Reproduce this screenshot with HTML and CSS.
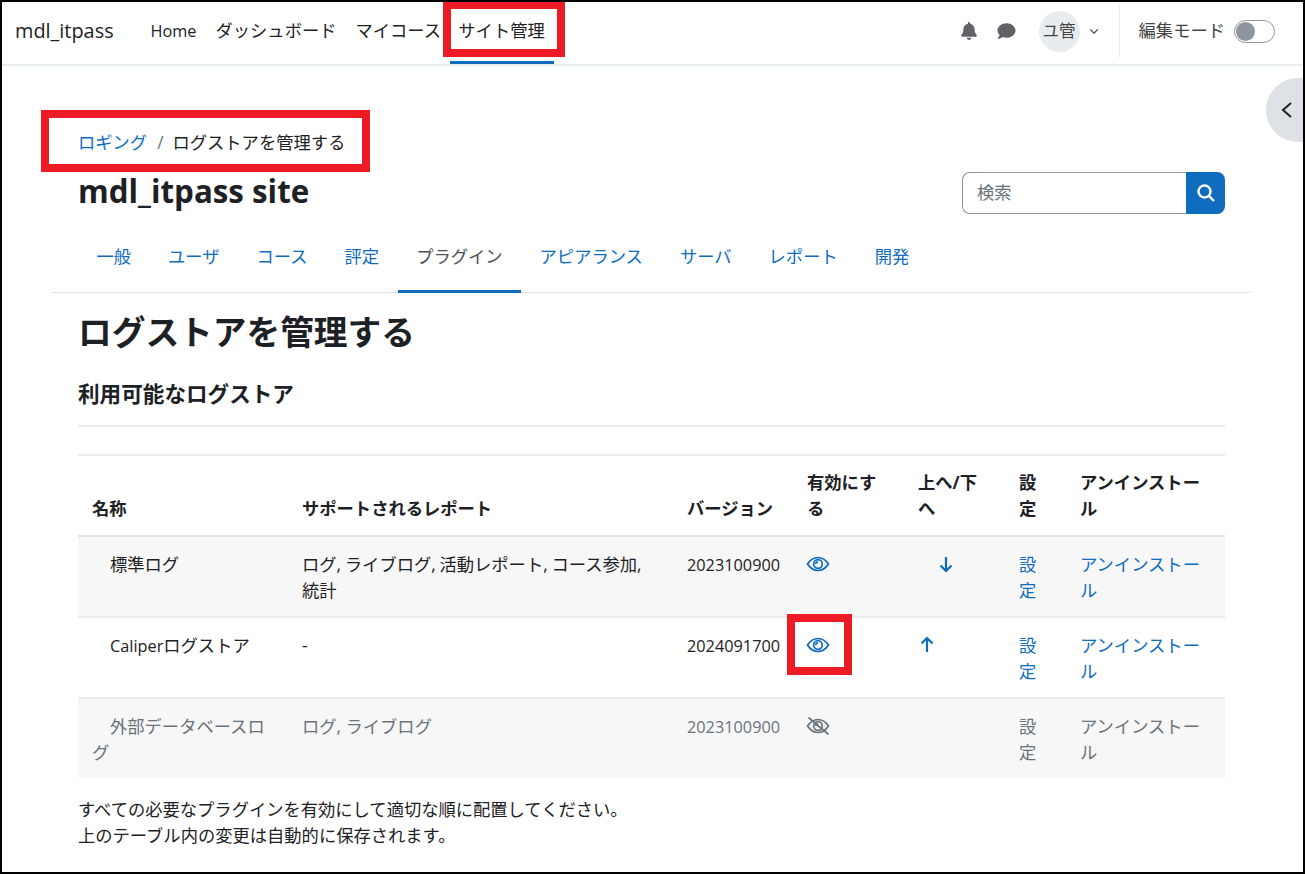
FILE: index.html
```html
<!DOCTYPE html>
<html lang="ja">
<head>
<meta charset="utf-8">
<title>ログストアを管理する</title>
<link rel="stylesheet" href="styles.css">
</head>
<body>
<div class="frame">
  <header class="navbar">
    <a class="brand">mdl_itpass</a>
    <nav class="primary">
      <a class="nav-link latin">Home</a>
      <a class="nav-link">ダッシュボード</a>
      <a class="nav-link">マイコース</a>
      <a class="nav-link active">サイト管理</a>
    </nav>
    <div class="nav-right">
      <svg class="nav-icon bell" viewBox="0 0 448 512"><path d="M224 512c35 0 64-29 64-64H160c0 35 29 64 64 64zm215-150c-19-21-55-52-55-154 0-78-54-140-128-155V32a32 32 0 0 0-64 0v21C118 68 64 130 64 208c0 102-36 133-55 154-6 6-9 14-9 22 0 16 13 32 32 32h384c19 0 32-16 32-32 0-8-3-16-9-22z"/></svg>
      <svg class="nav-icon chat" viewBox="0 0 512 512"><path d="M256 32C115 32 0 125 0 240c0 50 22 95 58 131-13 51-55 96-56 97-2 2-3 6-1 9s4 4 7 4c66 0 116-32 140-51 34 12 71 19 108 19 141 0 256-93 256-208S397 32 256 32z"/></svg>
      <div class="avatar">ユ管</div>
      <svg class="caret" viewBox="0 0 12 8"><path d="M1.5 1.5 6 6l4.5-4.5"/></svg>
      <div class="divider"></div>
      <span class="edit-label">編集モード</span>
      <span class="switch"><span class="knob"></span></span>
    </div>
  </header>

  <button class="drawer-toggle" aria-label="開く"><svg viewBox="0 0 12 20"><path d="M10 3 2 10l8 7"/></svg></button>

  <main class="main">
    <div class="breadcrumb"><a class="link">ロギング</a><span class="sep">/</span><span>ログストアを管理する</span></div>
    <div class="title-row">
      <h1 class="site-title">mdl_itpass site</h1>
      <form class="search">
        <input class="search-input" placeholder="検索">
        <span class="search-btn"><svg viewBox="0 0 20 20"><circle cx="8.5" cy="8.5" r="6"/><path d="m13 13 5 5"/></svg></span>
      </form>
    </div>
    <ul class="tabs">
      <li class="tab">一般</li>
      <li class="tab">ユーザ</li>
      <li class="tab">コース</li>
      <li class="tab">評定</li>
      <li class="tab current">プラグイン</li>
      <li class="tab">アピアランス</li>
      <li class="tab">サーバ</li>
      <li class="tab">レポート</li>
      <li class="tab">開発</li>
    </ul>
    <h2 class="page-title">ログストアを管理する</h2>
    <h3 class="section-title">利用可能なログストア</h3>
    <hr class="rule">
    <table class="stores">
      <colgroup>
        <col class="c-name"><col class="c-rep"><col class="c-ver"><col class="c-en"><col class="c-ud"><col class="c-set"><col class="c-un">
      </colgroup>
      <thead>
        <tr>
          <th>名称</th><th>サポートされるレポート</th><th>バージョン</th><th>有効にする</th><th>上へ/下へ</th><th>設定</th><th>アンインストール</th>
        </tr>
      </thead>
      <tbody>
        <tr class="odd">
          <td class="name">標準ログ</td>
          <td class="reports">ログ, ライブログ, 活動レポート, コース参加, 統計</td>
          <td class="latin">2023100900</td>
          <td><svg class="eye" viewBox="0 0 24 18"><use href="#eye-on"/></svg></td>
          <td><svg class="arrow down" viewBox="0 0 16 18"><path d="M8 2v14M2.5 10.5 8 16l5.500-5.500"/></svg></td>
          <td><a class="link">設定</a></td>
          <td><a class="link">アンインストール</a></td>
        </tr>
        <tr>
          <td class="name"><span class="latin">Caliper</span>ログストア</td>
          <td>-</td>
          <td class="latin">2024091700</td>
          <td><svg class="eye" viewBox="0 0 24 18"><use href="#eye-on"/></svg></td>
          <td><svg class="arrow" viewBox="0 0 16 18"><path d="M8 16V2M2.500 7.500 8 2l5.500 5.500"/></svg></td>
          <td><a class="link">設定</a></td>
          <td><a class="link">アンインストール</a></td>
        </tr>
        <tr class="odd dimmed">
          <td class="name">外部データベースログ</td>
          <td>ログ, ライブログ</td>
          <td class="latin">2023100900</td>
          <td><svg class="eye off" viewBox="0 0 24 18"><use href="#eye-on"/><path d="M2.500 .5 22.500 17.500"/></svg></td>
          <td></td>
          <td>設定</td>
          <td>アンインストール</td>
        </tr>
      </tbody>
    </table>
    <p class="note">すべての必要なプラグインを有効にして適切な順に配置してください。<br>上のテーブル内の変更は自動的に保存されます。</p>
  </main>

  <svg class="defs" aria-hidden="true"><defs><g id="eye-on"><path d="M1.500 9C4.500 4.500 8 2.500 12 2.500S19.500 4.500 22.500 9C19.500 13.500 16 15.500 12 15.500S4.500 13.500 1.500 9Z"/><circle cx="12" cy="9" r="4.300"/><path d="M12 6.800A2.200 2.200 0 0 0 9.800 9"/></g></defs></svg>

  <div class="mark mark-nav"></div>
  <div class="mark mark-crumb"></div>
  <div class="mark mark-eye"></div>
</div>
</body>
</html>
```
FILE: styles.css
```css
* { box-sizing: border-box; }
html, body { margin: 0; padding: 0; background: #fff; }
body {
  font-family: "Open Sans", "Noto Sans CJK JP", sans-serif;
  font-size: 17.3px;
  line-height: 26px;
  color: #1d2125;
}
.frame {
  position: relative;
  width: 1305px;
  height: 874px;
  border: 2px solid #000;
  overflow: hidden;
}
.defs { width: 0; height: 0; position: absolute; }
.link { color: #0f6cbf; }
.latin { font-size: 16.3px; }

/* navbar */
.navbar {
  display: flex;
  align-items: center;
  height: 64px;
  border-bottom: 2px solid #e6ebf0;
  padding: 0 0 4px 13px;
}
.brand { font-size: 19.9px; width: 126px; }
.primary { display: flex; align-items: flex-start; align-self: flex-start; }
.nav-link {
  display: flex;
  align-items: center;
  padding: 0 9.5px 2px;
  height: 62px;
  border-bottom: 3px solid transparent;
  white-space: nowrap;
}
.nav-link.active { border-bottom-color: #0f6cbf; width: 104px; justify-content: center; padding: 0 0 2px; margin-left: -1px; }
.nav-right { margin-left: auto; display: flex; align-items: center; padding-right: 28px; height: 100%; }
.nav-icon { fill: #5f6368; height: 18px; display: block; }
.bell { width: 16px; margin-right: 19px; }
.chat { width: 21px; margin-right: 22px; }
.avatar {
  width: 41px;
  height: 41px;
  border-radius: 50%;
  background: #e9ecef;
  display: flex;
  align-items: center;
  justify-content: center;
  white-space: nowrap;
  font-size: 16.5px;
  color: #444;
}
.caret { width: 10px; height: 7px; margin-left: 9px; fill: none; stroke: #444; stroke-width: 1.5; }
.divider { width: 1px; height: 52px; background: #e6ebf0; margin: 0 19px 0 20px; }
.edit-label { white-space: nowrap; color: #444; }
.switch {
  width: 41px;
  height: 23px;
  border: 1px solid #8f959e;
  border-radius: 12px;
  margin-left: 9px;
  padding: 1px;
  display: block;
}
.knob { display: block; width: 19px; height: 19px; border-radius: 50%; background: #8f959e; }

/* drawer toggle */
.drawer-toggle {
  position: absolute;
  right: -2px;
  top: 76px;
  width: 39px;
  height: 64px;
  background: #dee2e6;
  border: 0;
  padding: 0 0 0 2px;
  border-radius: 32px 0 0 32px;
  display: flex;
  align-items: center;
  justify-content: flex-start;
}
.drawer-toggle svg { width: 12px; height: 20px; margin-left: 13px; fill: none; stroke: #1d2125; stroke-width: 2; }

/* main */
.main { padding: 0 78px 0 76px; }
.breadcrumb { display: flex; margin-top: 64px; height: 26px; }
.sep { color: #6a737b; margin: 0 9px 0 10px; }
.title-row { display: flex; align-items: center; justify-content: space-between; margin-top: 9px; height: 50px; }
.site-title { margin: 2px 0 0; font-size: 31.3px; font-weight: 700; line-height: 44px; }
.search { display: flex; height: 42px; width: 263px; margin-top: 5px; }
.search-input {
  flex: 1;
  min-width: 0;
  border: 1px solid #8f959e;
  border-right: 0;
  border-radius: 8px 0 0 8px;
  padding: 0 14px;
  font: inherit;
  outline: 0;
}
.search-input::placeholder { color: #6a737b; opacity: 1; }
.search-btn {
  width: 39px;
  background: #0f6cbf;
  border-radius: 0 8px 8px 0;
  display: flex;
  align-items: center;
  justify-content: center;
}
.search-btn svg { width: 20px; height: 20px; fill: none; stroke: #fff; stroke-width: 2.4; }

.tabs {
  display: flex;
  list-style: none;
  margin: 8px -26px 0;
  padding: 0 0 0 26px;
  height: 70px;
  border-bottom: 1px solid #dee2e6;
}
.tab { padding: 0 18.5px; height: 70px; line-height: 68px; color: #0f6cbf; white-space: nowrap; }
.tab.current { color: #495057; border-bottom: 3px solid #0f6cbf; }

.page-title { margin: 16px 0 0; font-size: 33.7px; font-weight: 700; line-height: 46px; }
.section-title { margin: 24px 0 0; font-size: 21.6px; font-weight: 700; line-height: 30px; }
.rule { margin: 16px 0 0; border: 0; border-top: 2px solid #e9ecef; }

/* table */
.stores { width: 1147px; margin-top: 27px; border-collapse: collapse; table-layout: fixed; }
.c-name { width: 210px; }
.c-rep { width: 385px; }
.c-ver { width: 120px; }
.c-en { width: 111px; }
.c-ud { width: 101px; }
.c-set { width: 61px; }
.c-un { width: 159px; }
.stores th, .stores td { padding: 15px 14px 12px; vertical-align: top; text-align: left; }
.stores thead tr { border-top: 2px solid #e9ecef; border-bottom: 2px solid #dee2e6; }
.stores th { vertical-align: bottom; font-weight: 700; padding-top: 14px; padding-bottom: 13px; }
.stores tbody tr { border-bottom: 2px solid #e9ecef; }
.stores tbody tr:last-child { border-bottom: 0; }
.odd { background: #f7f7f7; }
.name { text-indent: 18px; }
.reports { word-spacing: -.7px; }
.dimmed td { color: #6a737b; }
.eye { width: 24px; height: 18px; display: inline-block; vertical-align: -2px; margin-left: -1px; fill: none; stroke: #0f6cbf; stroke-width: 1.7; }
.eye.off { stroke: #6a737b; }
.arrow { width: 16px; height: 18px; vertical-align: -2px; margin-left: 1px; fill: none; stroke: #0f6cbf; stroke-width: 2.2; }
.arrow.down { margin-left: 20px; }
.note { margin: 19px 0 0; line-height: 26px; }

/* red annotation boxes */
.mark { position: absolute; border: 8px solid #ed1c24; }
.mark-nav { left: 441px; top: -1px; width: 122px; height: 56px; }
.mark-crumb { left: 39px; top: 108px; width: 329px; height: 62px; }
.mark-eye { left: 785px; top: 612px; width: 65px; height: 61px; }
```
